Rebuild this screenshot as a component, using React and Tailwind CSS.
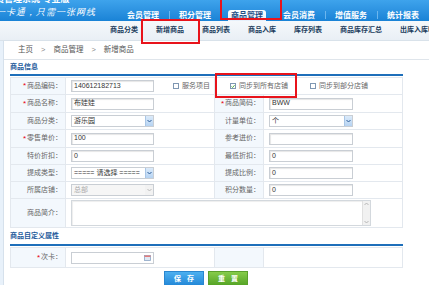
import React from "react";

const navItems = ["会员管理", "积分管理", "商品管理", "会员消费", "增值服务", "统计报表"];
const subItems = ["商品分类", "新增商品", "商品列表", "商品入库", "库存列表", "商品库存汇总", "出库入库明细"];

function Label({ req, children }) {
  return (
    <div className="flex items-center justify-end pr-[3px] bg-[#f3f8fd] border-r border-[#e3e8ee] text-[7px] text-[#666] whitespace-nowrap">
      {req && <span className="text-[#e60012] text-[8px] leading-none mr-[1px]">*</span>}
      {children}：
    </div>
  );
}

function TextBox({ value = "", w = "w-[83px]" }) {
  return (
    <div className={`h-[12px] ${w} border border-[#c9ced4] bg-white shadow-[inset_1px_1px_1px_#e6e6e6] flex items-center px-[2px] text-[7px] text-[#333]`}>
      {value}
    </div>
  );
}

function SelectBox({ value, disabled, w = "w-[83px]" }) {
  return (
    <div className={`h-[12px] ${w} border border-[#c9ced4] flex items-center text-[7px] ${disabled ? "bg-[#f6f6f6] text-[#aaa]" : "bg-white text-[#333]"}`}>
      <span className="flex-1 pl-[2px] whitespace-nowrap">{value}</span>
      <span className={`w-[8px] h-[10px] flex items-center justify-center ${disabled ? "bg-[#f2f2f2]" : "bg-gradient-to-b from-[#dcebfa] to-[#b6d3f2] border-l border-[#a9c6e6]"}`}>
        <svg width="5" height="4" viewBox="0 0 5 4">
          <path d="M0.5 1 L2.5 3 L4.5 1" fill="none" stroke={disabled ? "#bbb" : "#2d5d99"} strokeWidth="1" />
        </svg>
      </span>
    </div>
  );
}

function Check({ checked, label }) {
  return (
    <div className="flex items-center gap-[3px] text-[7px] text-[#666] whitespace-nowrap">
      <span className="w-[6px] h-[6px] border border-[#7f97b2] bg-white flex items-center justify-center">
        {checked && (
          <svg width="5" height="5" viewBox="0 0 5 5">
            <path d="M0.6 2.4 L2 3.8 L4.5 0.8" fill="none" stroke="#2e9b1e" strokeWidth="1" />
          </svg>
        )}
      </span>
      {label}
    </div>
  );
}

function Row({ h = "h-[17px]", children }) {
  return (
    <div className={`grid grid-cols-[55px_149px_49px_140px] ${h} border-b border-[#e3e8ee]`}>{children}</div>
  );
}

function Cell({ children, className = "" }) {
  return <div className={`flex items-center pl-[5px] border-r border-[#e3e8ee] ${className}`}>{children}</div>;
}

export default function App() {
  return (
    <div className="relative w-[429px] h-[285px] overflow-hidden bg-white font-['Liberation_Sans','Noto_Sans_CJK_SC',sans-serif]">
      {/* header */}
      <div className="h-[21px] bg-gradient-to-b from-[#3ea3ec] to-[#1983d6] flex">
        <div className="w-[118px] text-white overflow-hidden">
          <div className="-ml-[14px] -mt-[6px] text-[9px] font-bold leading-[11px] whitespace-nowrap">会员管理系统 专业版</div>
          <div className="-ml-[4px] mt-[2px] text-[9px] italic font-serif leading-[10px] tracking-[1px] whitespace-nowrap">一卡通，只需一张网线</div>
        </div>
        <div className="flex items-end">
          {navItems.map((t, i) => (
            <div key={t} className="relative w-[52px] h-[21px] flex items-end justify-center">
              {i > 0 && i !== 2 && i !== 3 && <span className="absolute left-0 top-[11px] w-px h-[8px] bg-[#6cb6ee]" />}
              {i === 2 ? (
                <div className="w-[38px] h-[11px] rounded-t-[3px] bg-gradient-to-b from-white to-[#e4f0fb] flex items-center justify-center text-[8px] font-bold text-[#1f4f86]">
                  {t}
                </div>
              ) : (
                <div className="h-[11px] flex items-center text-[8px] font-bold text-white">{t}</div>
              )}
            </div>
          ))}
        </div>
      </div>

      {/* sub nav */}
      <div className="h-[20px] bg-gradient-to-b from-[#f5f8fb] to-[#e9eff5] border-b border-[#d9e2ea] flex items-center pl-[101px]">
        {subItems.map((t, i) => (
          <React.Fragment key={t}>
            {i > 0 && <span className="w-px h-[6px] bg-[#b9c4cf]" />}
            <span className="px-[9px] text-[7px] font-bold text-[#213c5c] whitespace-nowrap">{t}</span>
          </React.Fragment>
        ))}
      </div>

      {/* body */}
      <div className="flex h-[244px]">
        <div className="w-[4px] bg-[#e8f1fa] border-r border-[#d6e1ec]" />
        <div className="flex-1">
          {/* breadcrumb */}
          <div className="h-[19px] border-b border-[#dfe5eb] flex items-center gap-[8px] pl-[14px] text-[7.5px] text-[#555]">
            <span>主页</span>
            <span className="text-[#888]">&gt;</span>
            <span>商品管理</span>
            <span className="text-[#888]">&gt;</span>
            <span>新增商品</span>
          </div>

          <div className="pl-[6px]">
            <div className="h-[14px] flex items-center text-[7px] font-bold text-[#1d5a9b]">商品信息</div>
            <div className="w-[393px] h-[2px] bg-[#1e6fba] mb-[1px]" />
            <div className="w-[393px] border-l border-t border-r border-[#e3e8ee]">
              <Row>
                <Label req>商品编码</Label>
                <Cell>
                  <TextBox value="140612182713" />
                  <div className="ml-[19px]">
                    <Check label="服务项目" />
                  </div>
                </Cell>
                <div className="col-span-2 flex items-center pl-[15px] gap-[22px]">
                  <Check checked label="同步到所有店铺" />
                  <Check label="同步到部分店铺" />
                </div>
              </Row>
              <Row h="h-[18px]">
                <Label req>商品名称</Label>
                <Cell><TextBox value="布娃娃" /></Cell>
                <Label req>商品简码</Label>
                <Cell className="pl-[4px] border-r-0"><TextBox value="BWW" w="w-[84px]" /></Cell>
              </Row>
              <Row>
                <Label>商品分类</Label>
                <Cell><SelectBox value="游乐园" /></Cell>
                <Label>计量单位</Label>
                <Cell className="pl-[4px] border-r-0"><SelectBox value="个" w="w-[84px]" /></Cell>
              </Row>
              <Row h="h-[18px]">
                <Label req>零售单价</Label>
                <Cell><TextBox value="100" /></Cell>
                <Label>参考进价</Label>
                <Cell className="pl-[4px] border-r-0"><TextBox w="w-[84px]" /></Cell>
              </Row>
              <Row>
                <Label>特价折扣</Label>
                <Cell><TextBox value="0" /></Cell>
                <Label>最低折扣</Label>
                <Cell className="pl-[4px] border-r-0"><TextBox value="0" w="w-[84px]" /></Cell>
              </Row>
              <Row>
                <Label>提成类型</Label>
                <Cell><SelectBox value="===== 请选择 =====" /></Cell>
                <Label>提成比例</Label>
                <Cell className="pl-[4px] border-r-0"><TextBox value="0" w="w-[84px]" /></Cell>
              </Row>
              <Row>
                <Label>所属店铺</Label>
                <Cell><SelectBox value="总部" disabled /></Cell>
                <Label>积分数量</Label>
                <Cell className="pl-[4px] border-r-0"><TextBox value="0" w="w-[84px]" /></Cell>
              </Row>
              <div className="grid grid-cols-[55px_338px] h-[29px] border-b border-[#e3e8ee]">
                <Label>商品简介</Label>
                <div className="flex items-center pl-[5px]">
                  <div className="w-[300px] h-[26px] border border-[#d3d8dd] bg-white flex justify-end shadow-[inset_1px_1px_1px_#eee]">
                    <div className="w-[8px] h-full bg-[#f1f1f1] border-l border-[#e0e0e0] flex flex-col items-center justify-between py-[1px]">
                      <svg width="5" height="4" viewBox="0 0 5 4"><path d="M0.5 3 L2.5 1 L4.5 3" fill="none" stroke="#aaa" strokeWidth="0.8" /></svg>
                      <svg width="5" height="4" viewBox="0 0 5 4"><path d="M0.5 1 L2.5 3 L4.5 1" fill="none" stroke="#aaa" strokeWidth="0.8" /></svg>
                    </div>
                  </div>
                </div>
              </div>
            </div>

            <div className="h-[16px] flex items-center text-[7px] font-bold text-[#1d5a9b]">商品自定义属性</div>
            <div className="w-[393px] h-[2px] bg-[#1e6fba] mb-[1px]" />
            <div className="w-[393px] border border-[#e3e8ee]">
              <div className="grid grid-cols-[55px_149px_49px_140px] h-[19px]">
                <Label req>次卡</Label>
                <Cell>
                  <div className="h-[12px] w-[83px] border border-[#c9ced4] bg-white flex items-center justify-end pr-[2px]">
                    <svg width="7" height="6" viewBox="0 0 7 6">
                      <rect x="0.5" y="0.5" width="6" height="5" fill="#dfe8f3" stroke="#8aa5c5" strokeWidth="0.8" />
                      <rect x="0.5" y="0.5" width="6" height="1.5" fill="#e57b7b" />
                    </svg>
                  </div>
                </Cell>
                <div className="bg-[#f3f8fd] border-r border-[#e3e8ee]" />
                <div />
              </div>
            </div>

            <div className="flex gap-[4px] mt-[3px] pl-[154px]">
              <div className="w-[40px] h-[17px] bg-gradient-to-b from-[#4cb0f0] to-[#1b82d4] border border-[#2a86cf] flex items-center justify-center text-[7px] font-bold text-white tracking-[6px] pl-[6px]">
                保存
              </div>
              <div className="w-[40px] h-[17px] bg-gradient-to-b from-[#86cc4a] to-[#4e9e1f] border border-[#5a9f2c] flex items-center justify-center text-[7px] font-bold text-white tracking-[6px] pl-[6px]">
                重置
              </div>
            </div>
          </div>
        </div>
      </div>

      {/* annotation boxes */}
      <div className="absolute left-[220px] top-[-2px] w-[62px] h-[22px] border-2 border-[#e8131b]" />
      <div className="absolute left-[141px] top-[19px] w-[59px] h-[25px] border-2 border-[#e8131b]" />
      <div className="absolute left-[215px] top-[73px] w-[82px] h-[25px] border-2 border-[#e8131b]" />
    </div>
  );
}
